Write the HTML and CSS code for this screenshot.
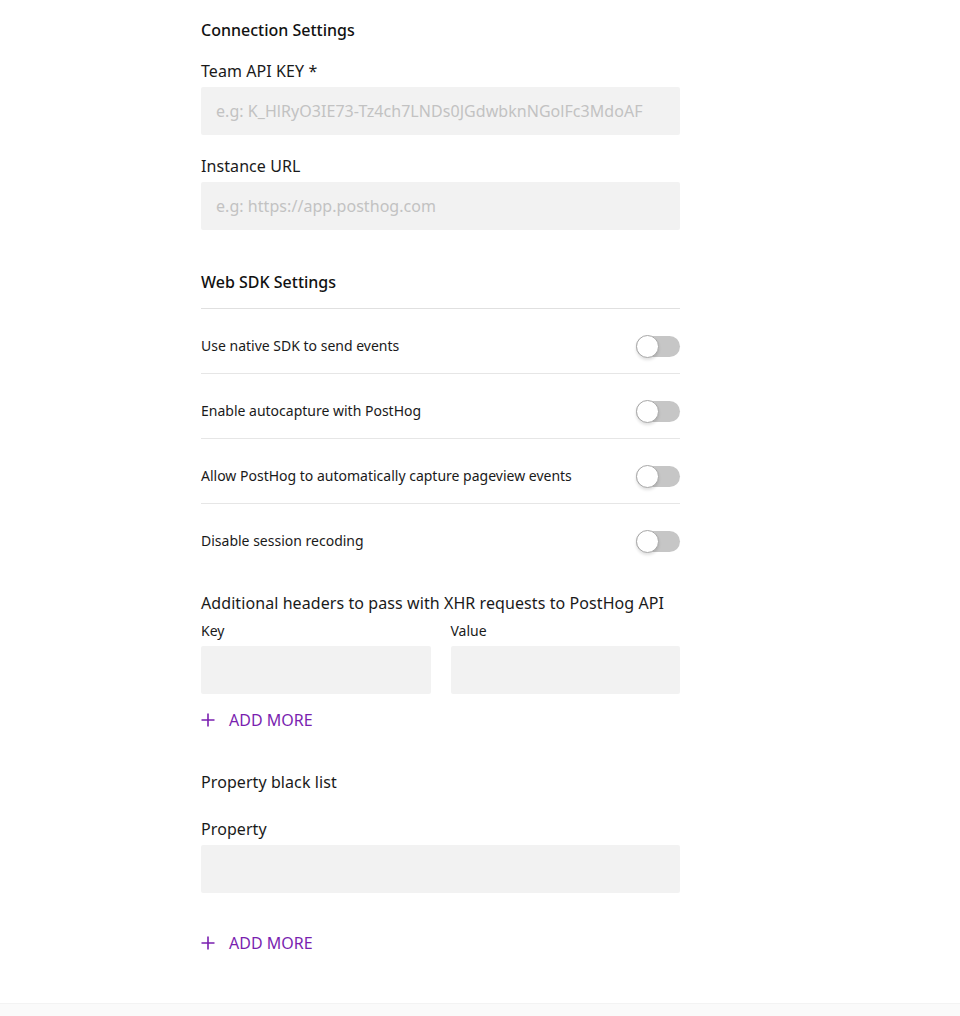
FILE: index.html
```html
<!DOCTYPE html>
<html lang="en">
<head>
<meta charset="utf-8">
<title>PostHog settings</title>
<link rel="stylesheet" href="styles.css">
</head>
<body>
<div class="page">
  <main class="form">
    <h2 class="section-title">Connection Settings</h2>
    <div class="field first">
      <label class="label">Team API KEY *</label>
      <input class="input" type="text" placeholder="e.g: K_HlRyO3IE73-Tz4ch7LNDs0JGdwbknNGolFc3MdoAF">
    </div>
    <div class="field">
      <label class="label">Instance URL</label>
      <input class="input" type="text" placeholder="e.g: https://app.posthog.com">
    </div>

    <h2 class="section-title sdk">Web SDK Settings</h2>
    <div class="rows">
      <div class="row">
        <span class="row-text">Use native SDK to send events</span>
        <span class="toggle"><span class="knob"></span></span>
      </div>
      <div class="row">
        <span class="row-text">Enable autocapture with PostHog</span>
        <span class="toggle"><span class="knob"></span></span>
      </div>
      <div class="row">
        <span class="row-text">Allow PostHog to automatically capture pageview events</span>
        <span class="toggle"><span class="knob"></span></span>
      </div>
      <div class="row last">
        <span class="row-text">Disable session recoding</span>
        <span class="toggle"><span class="knob"></span></span>
      </div>
    </div>

    <div class="group headers">
      <div class="group-title">Additional headers to pass with XHR requests to PostHog API</div>
      <div class="pair">
        <div class="pair-col">
          <label class="small-label">Key</label>
          <input class="input" type="text">
        </div>
        <div class="pair-col">
          <label class="small-label">Value</label>
          <input class="input" type="text">
        </div>
      </div>
      <button class="add-more" type="button">
        <svg class="plus" width="14" height="14" viewBox="0 0 14 14"><path d="M7 0.5V13.5M0.5 7H13.5" stroke="currentColor" stroke-width="1.6" fill="none"/></svg>
        <span>ADD MORE</span>
      </button>
    </div>

    <div class="group blacklist">
      <div class="group-title">Property black list</div>
      <div class="field prop">
        <label class="label">Property</label>
        <input class="input" type="text">
      </div>
      <button class="add-more second" type="button">
        <svg class="plus" width="14" height="14" viewBox="0 0 14 14"><path d="M7 0.5V13.5M0.5 7H13.5" stroke="currentColor" stroke-width="1.6" fill="none"/></svg>
        <span>ADD MORE</span>
      </button>
    </div>
  </main>
  <footer class="footer"></footer>
</div>
</body>
</html>
```

FILE: styles.css
```css
* { box-sizing: border-box; }
html, body {
  margin: 0;
  padding: 0;
  background: #ffffff;
}
body {
  font-family: "Noto Sans", "Open Sans", sans-serif;
  color: #1a1a1a;
}
.page {
  display: flex;
  flex-direction: column;
  min-height: 1016px;
}
.form {
  width: 479px;
  margin-left: 201px;
  padding-top: 19px;
  display: flex;
  flex-direction: column;
}
.section-title {
  margin: 0;
  font-size: 16px;
  line-height: 22px;
  font-weight: 500;
  color: #111;
}
.section-title.sdk {
  margin-top: 41px;
}
.field {
  display: flex;
  flex-direction: column;
  gap: 5px;
  margin-top: 20px;
}
.field.first { margin-top: 19px; }
.label {
  font-size: 16px;
  line-height: 22px;
  letter-spacing: 0.08px;
  color: #1a1a1a;
}
.input {
  height: 48px;
  width: 100%;
  border: none;
  border-radius: 2px;
  background: #f2f2f2;
  padding: 0 15px;
  font-family: "Noto Sans", "Open Sans", sans-serif;
  font-size: 16px;
  letter-spacing: 0.05px;
  color: #333;
  outline: none;
}
.input::placeholder {
  color: #c2c2c2;
}
.rows {
  margin-top: 15px;
  border-top: 1px solid #e0e0e0;
}
.row {
  display: flex;
  align-items: center;
  justify-content: space-between;
  padding: 26px 0 17px;
  border-bottom: 1px solid #e6e6e6;
}
.row.last { border-bottom: none; }
.row-text {
  font-size: 14px;
  line-height: 20px;
  color: #1a1a1a;
}
.toggle {
  position: relative;
  width: 44px;
  height: 21px;
  border-radius: 11px;
  background: #c6c6c6;
  flex-shrink: 0;
  top: 1px;
}
.knob {
  position: absolute;
  left: 0;
  top: -1px;
  width: 23px;
  height: 23px;
  border-radius: 50%;
  background: #fff;
  border: 1px solid #a8a8a8;
  box-shadow: 0 2px 3px rgba(0,0,0,0.12);
}
.group {
  display: flex;
  flex-direction: column;
}
.headers { margin-top: 24px; }
.group-title {
  font-size: 16px;
  line-height: 22px;
  letter-spacing: 0.08px;
  color: #1a1a1a;
}
.pair {
  display: grid;
  grid-template-columns: 1fr 1fr;
  gap: 20px;
  margin-top: 7px;
}
.pair-col {
  display: flex;
  flex-direction: column;
  gap: 5px;
}
.small-label {
  font-size: 14px;
  line-height: 20px;
  color: #1a1a1a;
}
.add-more {
  display: flex;
  align-items: center;
  gap: 14px;
  margin-top: 15px;
  padding: 0;
  border: none;
  background: none;
  color: #7a1fb0;
  font-family: "Noto Sans", "Open Sans", sans-serif;
  font-size: 16px;
  line-height: 22px;
  cursor: pointer;
  align-self: flex-start;
}
.plus { display: block; }
.add-more.second { margin-top: 39px; }
.blacklist { margin-top: 40px; }
.field.prop { margin-top: 25px; }
.footer {
  margin-top: auto;
  height: 13px;
  background: #fafafa;
  border-top: 1px solid #f3f3f3;
}
```
